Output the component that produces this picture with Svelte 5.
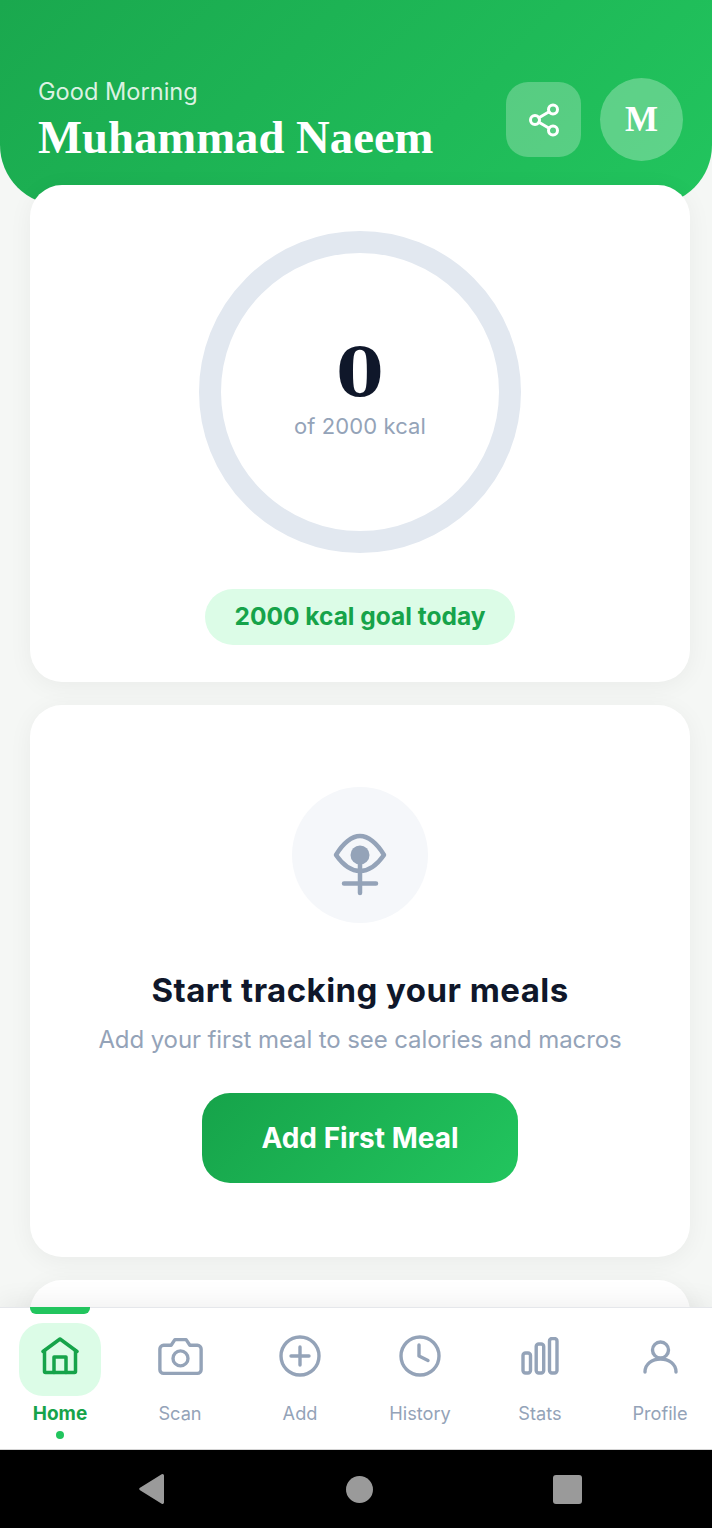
<script>
	const tabs = [
		{ key: 'home', label: 'Home', active: true },
		{ key: 'scan', label: 'Scan' },
		{ key: 'add', label: 'Add' },
		{ key: 'history', label: 'History' },
		{ key: 'stats', label: 'Stats' },
		{ key: 'profile', label: 'Profile' }
	];

	const goal = 2000;
	let eaten = 0;
</script>

<div class="screen">
	<div class="content">
		<header class="hero">
			<div class="greeting">
				<p class="hello">Good Morning</p>
				<h1 class="name">Muhammad Naeem</h1>
			</div>
			<div class="hero-actions">
				<button class="share" aria-label="Share">
					<svg width="36" height="36" viewBox="0 0 24 24" fill="none" stroke="#fff" stroke-width="2" stroke-linecap="round" stroke-linejoin="round">
						<circle cx="18" cy="5" r="3" />
						<circle cx="6" cy="12" r="3" />
						<circle cx="18" cy="19" r="3" />
						<path d="M8.6 13.5l6.8 4M15.4 6.5l-6.8 4" />
					</svg>
				</button>
				<div class="avatar">M</div>
			</div>
		</header>

		<main class="cards">
			<section class="card goal-card">
				<div class="ring">
					<span class="eaten">{eaten}</span>
					<span class="of">of {goal} kcal</span>
				</div>
				<div class="goal-pill">{goal} kcal goal today</div>
			</section>

			<section class="card empty-card">
				<div class="empty-icon">
					<svg width="60" height="70" viewBox="0 0 60 70" fill="none" stroke="#94a3b8" stroke-width="4.500" stroke-linecap="round" stroke-linejoin="round">
						<path d="M6 25C13 13 22 6 30 6S47 13 54 25C47 35 39 41 30 41S13 35 6 25Z" />
						<circle cx="30" cy="25" r="9.500" fill="#94a3b8" stroke="none" />
						<path d="M30 30V63M14 53.500H46" />
					</svg>
				</div>
				<h2>Start tracking your meals</h2>
				<p>Add your first meal to see calories and macros</p>
				<button class="add-btn">Add First Meal</button>
			</section>

			<section class="card next-card"></section>
		</main>
	</div>

	<nav class="tabbar">
		{#each tabs as tab}
			<div class="tab" class:active={tab.active}>
				{#if tab.active}<span class="tab-bar"></span>{/if}
				<div class="tab-icon">
					{#if tab.key === 'home'}
						<svg width="38" height="38" viewBox="0 0 38 38" fill="none" stroke="#16a34a" stroke-width="3.500" stroke-linecap="round" stroke-linejoin="round">
							<path d="M2 14.500L19 2L36 14.500" />
							<path d="M3.500 13.500V34.500a1 1 0 0 0 1 1H33.500a1 1 0 0 0 1-1V13.500" />
							<path d="M13 35.500V20H25V35.500" />
						</svg>
					{:else if tab.key === 'scan'}
						<svg width="45" height="45" viewBox="0 0 24 24" fill="none" stroke="#94a3b8" stroke-width="1.800" stroke-linecap="round" stroke-linejoin="round">
							<path d="M23 19a2 2 0 0 1-2 2H3a2 2 0 0 1-2-2V8a2 2 0 0 1 2-2h4l2-3h6l2 3h4a2 2 0 0 1 2 2z" />
							<circle cx="12" cy="13" r="4" />
						</svg>
					{:else if tab.key === 'add'}
						<svg width="42" height="42" viewBox="0 0 42 42" fill="none" stroke="#94a3b8" stroke-width="3.400" stroke-linecap="round">
							<circle cx="21" cy="21" r="19" />
							<path d="M21 12V30M12 21H30" />
						</svg>
					{:else if tab.key === 'history'}
						<svg width="42" height="42" viewBox="0 0 42 42" fill="none" stroke="#94a3b8" stroke-width="3.400" stroke-linecap="round" stroke-linejoin="round">
							<circle cx="21" cy="21" r="19" />
							<path d="M20 10V21L29 25.500" />
						</svg>
					{:else if tab.key === 'stats'}
						<svg width="38" height="38" viewBox="0 0 38 38" fill="none" stroke="#94a3b8" stroke-width="3.400">
							<rect x="2" y="16" width="7.500" height="20" rx="2.500" />
							<rect x="15.200" y="7" width="7.500" height="29" rx="2.500" />
							<rect x="28.500" y="1.500" width="7.500" height="34.500" rx="2.500" />
						</svg>
					{:else}
						<svg width="38" height="38" viewBox="0 0 38 38" fill="none" stroke="#94a3b8" stroke-width="3.400" stroke-linecap="round">
							<circle cx="19.500" cy="13" r="8" />
							<path d="M4 35C4 27 11 22 19.500 22S35 27 35 35" />
						</svg>
					{/if}
				</div>
				<span class="tab-label">{tab.label}</span>
				{#if tab.active}<span class="tab-dot"></span>{/if}
			</div>
		{/each}
	</nav>

	<div class="system-bar">
		<svg width="28" height="32" viewBox="0 0 28 32"><path d="M26 2.500V29.500a1.500 1.500 0 0 1-2.300 1.200L2 17.200a1.500 1.500 0 0 1 0-2.400L23.700 1.300A1.500 1.500 0 0 1 26 2.500Z" fill="#9a9a9a" /></svg>
		<span class="sys-circle"></span>
		<span class="sys-square"></span>
	</div>
</div>

<style>
	:global(body) {
		margin: 0;
		background: #f5f7f5;
	}

	.screen {
		width: 712px;
		height: 1528px;
		display: flex;
		flex-direction: column;
		overflow: hidden;
		font-family: "Inter", "Liberation Sans", sans-serif;
		background: #f5f7f5;
	}

	.content {
		flex: 1;
		min-height: 0;
		overflow: hidden;
	}

	.hero {
		height: 205px;
		box-sizing: border-box;
		padding: 78px 29px 0 38px;
		display: flex;
		justify-content: space-between;
		align-items: flex-start;
		background: linear-gradient(135deg, #1aa84e, #22c55e);
		border-radius: 0 0 60px 60px;
	}

	.hello {
		margin: 0;
		font-size: 23.600px;
		line-height: 28px;
		color: rgba(255, 255, 255, 0.85);
	}

	.name {
		margin: 6px 0 0;
		font-family: "Liberation Serif", "DejaVu Serif", serif;
		font-size: 46.700px;
		line-height: 50px;
		font-weight: 700;
		color: #fff;
	}

	.hero-actions {
		display: flex;
		align-items: center;
		gap: 19px;
	}

	.share {
		width: 75px;
		height: 75px;
		padding: 0;
		border: 0;
		border-radius: 22px;
		background: rgba(255, 255, 255, 0.25);
		display: flex;
		align-items: center;
		justify-content: center;
	}

	.avatar {
		width: 83px;
		height: 83px;
		border-radius: 50%;
		background: rgba(255, 255, 255, 0.28);
		display: flex;
		align-items: center;
		justify-content: center;
		font-family: "Liberation Serif", "DejaVu Serif", serif;
		font-size: 35px;
		font-weight: 700;
		color: #fff;
	}

	.cards {
		margin-top: -20px;
		padding: 0 22px 0 30px;
		display: flex;
		flex-direction: column;
		gap: 23px;
		position: relative;
	}

	.card {
		background: #fff;
		border-radius: 32px;
		box-shadow: 0 4px 24px rgba(0, 0, 0, 0.05);
	}

	.goal-card {
		height: 497px;
		box-sizing: border-box;
		padding-top: 46px;
		display: flex;
		flex-direction: column;
		align-items: center;
	}

	.ring {
		width: 322px;
		height: 322px;
		box-sizing: border-box;
		border: 22px solid #e2e8f0;
		border-radius: 50%;
		display: flex;
		flex-direction: column;
		align-items: center;
		padding-top: 80px;
	}

	.eaten {
		font-family: "DejaVu Serif", "Liberation Serif", serif;
		font-size: 68px;
		line-height: 78px;
		font-weight: 700;
		color: #0f172a;
	}

	.of {
		font-size: 22px;
		line-height: 30px;
		letter-spacing: 0.1px;
		color: #94a3b8;
	}

	.goal-pill {
		margin-top: 36px;
		width: 310px;
		height: 56px;
		padding-bottom: 2px;
		box-sizing: border-box;
		border-radius: 28px;
		background: #dcfce7;
		color: #16a34a;
		display: flex;
		align-items: center;
		justify-content: center;
		font-size: 24.500px;
		font-weight: 700;
	}

	.empty-card {
		height: 552px;
		box-sizing: border-box;
		padding-top: 82px;
		display: flex;
		flex-direction: column;
		align-items: center;
	}

	.empty-icon {
		width: 136px;
		height: 136px;
		border-radius: 50%;
		background: #f5f7fa;
		display: flex;
		align-items: center;
		justify-content: center;
	}

	.empty-icon svg {
		margin-top: 20px;
	}

	.empty-card h2 {
		margin: 44px 0 0;
		font-size: 33px;
		line-height: 46px;
		letter-spacing: 0.45px;
		font-weight: 700;
		color: #0f172a;
	}

	.empty-card p {
		margin: 9px 0 0;
		font-size: 24px;
		line-height: 36px;
		letter-spacing: -0.1px;
		color: #94a3b8;
	}

	.add-btn {
		margin-top: 35px;
		width: 316px;
		height: 90px;
		border: 0;
		border-radius: 28px;
		background: linear-gradient(135deg, #16a34a, #22c55e);
		color: #fff;
		font-family: inherit;
		font-size: 28px;
		font-weight: 700;
	}

	.next-card {
		height: 200px;
	}

	.tabbar {
		height: 143px;
		flex: none;
		box-sizing: border-box;
		display: grid;
		grid-template-columns: repeat(6, 120px);
		background: #fff;
		border-top: 1px solid #e5e7eb;
		border-bottom: 1px solid #d4d4d4;
		box-shadow: 0 -6px 24px rgba(0, 0, 0, 0.06);
		position: relative;
	}

	.tab {
		position: relative;
		display: flex;
		flex-direction: column;
		align-items: center;
		padding-top: 15px;
	}

	.tab-bar {
		position: absolute;
		top: -1px;
		left: 30px;
		width: 60px;
		height: 7px;
		border-radius: 0 0 6px 6px;
		background: #22c55e;
	}

	.tab-icon {
		width: 82px;
		height: 73px;
		box-sizing: border-box;
		padding-bottom: 7px;
		border-radius: 24px;
		display: flex;
		align-items: center;
		justify-content: center;
	}

	.active .tab-icon {
		background: #dcfce7;
	}

	.tab-label {
		margin-top: 3px;
		font-size: 18.200px;
		line-height: 28px;
		color: #94a3b8;
	}

	.active .tab-label {
		margin-top: 4px;
		font-size: 19px;
		font-weight: 700;
		color: #16a34a;
	}

	.tab-dot {
		width: 8px;
		height: 8px;
		margin-top: 3px;
		border-radius: 50%;
		background: #22c55e;
	}

	.system-bar {
		height: 78px;
		flex: none;
		box-sizing: border-box;
		padding-left: 8px;
		background: #000;
		display: flex;
		align-items: center;
		justify-content: center;
		gap: 180px;
	}

	.sys-circle {
		width: 27px;
		height: 27px;
		border-radius: 50%;
		background: #9a9a9a;
	}

	.sys-square {
		width: 29px;
		height: 29px;
		border-radius: 3px;
		background: #9a9a9a;
	}
</style>
